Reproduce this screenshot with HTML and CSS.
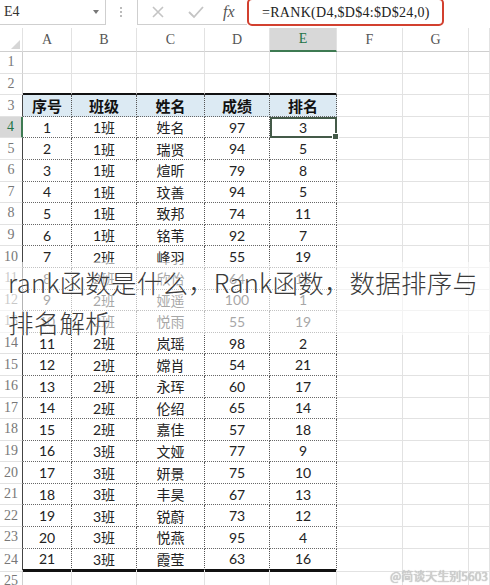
FILE: index.html
```html
<!DOCTYPE html>
<html lang="zh">
<head>
<meta charset="utf-8">
<title>RANK</title>
<link rel="stylesheet" href="styles.css">
</head>
<body>
<div class="page">
  <div class="bar">
    <div class="namebox"><span>E4</span><span class="arrow"></span></div>
    <div class="grip"></div>
    <div class="fbox">
      <svg class="ico" width="16" height="16" viewBox="0 0 16 16"><path d="M3 3L13 13M13 3L3 13" stroke="#c4c4c4" stroke-width="1.6" fill="none"/></svg>
      <svg class="ico" width="18" height="16" viewBox="0 0 18 16"><path d="M2 8L7 13L16 3" stroke="#c4c4c4" stroke-width="1.8" fill="none"/></svg>
      <span class="fx">fx</span>
    </div>
    <div class="formula">=RANK(D4,$D$4:$D$24,0)</div>
  </div>

  <div class="sheet">
    <div class="row hdr"><div class="corner"></div><div>A</div><div>B</div><div>C</div><div>D</div><div class="on">E</div><div>F</div><div>G</div><div></div></div>
    <div class="row"><div class="rh">1</div><div></div><div></div><div></div><div></div><div></div><div></div><div></div><div></div></div>
    <div class="row pre"><div class="rh">2</div><div></div><div></div><div></div><div></div><div></div><div></div><div></div><div></div></div>
    <div class="row tr head"><div class="rh">3</div><div>序号</div><div>班级</div><div>姓名</div><div>成绩</div><div>排名</div><div></div><div></div><div></div></div>
    <div class="row tr"><div class="rh on">4</div><div>1</div><div>1班</div><div>姓名</div><div>97</div><div class="sel">3</div><div></div><div></div><div></div></div>
    <div class="row tr"><div class="rh">5</div><div>2</div><div>1班</div><div>瑞贤</div><div>94</div><div>5</div><div></div><div></div><div></div></div>
    <div class="row tr"><div class="rh">6</div><div>3</div><div>1班</div><div>煊昕</div><div>79</div><div>8</div><div></div><div></div><div></div></div>
    <div class="row tr"><div class="rh">7</div><div>4</div><div>1班</div><div>玟善</div><div>94</div><div>5</div><div></div><div></div><div></div></div>
    <div class="row tr"><div class="rh">8</div><div>5</div><div>1班</div><div>致邦</div><div>74</div><div>11</div><div></div><div></div><div></div></div>
    <div class="row tr"><div class="rh">9</div><div>6</div><div>1班</div><div>铭苇</div><div>92</div><div>7</div><div></div><div></div><div></div></div>
    <div class="row tr"><div class="rh">10</div><div>7</div><div>2班</div><div>峰羽</div><div>55</div><div>19</div><div></div><div></div><div></div></div>
    <div class="row tr"><div class="rh">11</div><div>8</div><div>2班</div><div>欣怡</div><div>64</div><div>15</div><div></div><div></div><div></div></div>
    <div class="row tr"><div class="rh">12</div><div>9</div><div>2班</div><div>娅遥</div><div>100</div><div>1</div><div></div><div></div><div></div></div>
    <div class="row tr"><div class="rh">13</div><div>10</div><div>2班</div><div>悦雨</div><div>55</div><div>19</div><div></div><div></div><div></div></div>
    <div class="row tr"><div class="rh">14</div><div>11</div><div>2班</div><div>岚瑶</div><div>98</div><div>2</div><div></div><div></div><div></div></div>
    <div class="row tr"><div class="rh">15</div><div>12</div><div>2班</div><div>嫦肖</div><div>54</div><div>21</div><div></div><div></div><div></div></div>
    <div class="row tr"><div class="rh">16</div><div>13</div><div>2班</div><div>永珲</div><div>60</div><div>17</div><div></div><div></div><div></div></div>
    <div class="row tr"><div class="rh">17</div><div>14</div><div>2班</div><div>伦绍</div><div>65</div><div>14</div><div></div><div></div><div></div></div>
    <div class="row tr"><div class="rh">18</div><div>15</div><div>2班</div><div>嘉佳</div><div>57</div><div>18</div><div></div><div></div><div></div></div>
    <div class="row tr"><div class="rh">19</div><div>16</div><div>3班</div><div>文娅</div><div>77</div><div>9</div><div></div><div></div><div></div></div>
    <div class="row tr"><div class="rh">20</div><div>17</div><div>3班</div><div>妍景</div><div>75</div><div>10</div><div></div><div></div><div></div></div>
    <div class="row tr"><div class="rh">21</div><div>18</div><div>3班</div><div>丰昊</div><div>67</div><div>13</div><div></div><div></div><div></div></div>
    <div class="row tr"><div class="rh">22</div><div>19</div><div>3班</div><div>锐蔚</div><div>73</div><div>12</div><div></div><div></div><div></div></div>
    <div class="row tr"><div class="rh">23</div><div>20</div><div>3班</div><div>悦燕</div><div>95</div><div>4</div><div></div><div></div><div></div></div>
    <div class="row tr end"><div class="rh">24</div><div>21</div><div>3班</div><div>霞莹</div><div>63</div><div>16</div><div></div><div></div><div></div></div>
    <div class="row"><div class="rh">25</div><div></div><div></div><div></div><div></div><div></div><div></div><div></div><div></div></div>
  </div>

  <div class="title">rank函数是什么，Rank函数，数据排序与排名解析</div>
  <div class="mark">@简谈天生别5603</div>
</div>
</body>
</html>
```

FILE: styles.css
```css
* { box-sizing: border-box; }
html, body { margin: 0; padding: 0; }
body { background: #fff; width: 490px; height: 585px; overflow: hidden; }
.page { position: relative; width: 490px; height: 585px; overflow: hidden; }

.bar { height: 28px; display: flex; align-items: flex-start; background: #fff; }
.namebox {
  width: 106px; height: 25px; border: 1px solid #cfcfcf; border-top: none; border-left: none;
  display: flex; align-items: center; justify-content: space-between; padding: 0 6px 0 4px;
  font-family: "Liberation Serif", serif; font-size: 14px; color: #333;
}
.arrow { width: 0; height: 0; border-left: 3px solid transparent; border-right: 3px solid transparent; border-top: 4px solid #777; }
.grip { width: 31px; height: 25px; position: relative; }
.grip::before {
  content: ""; position: absolute; left: 14px; top: 7px; width: 2px; height: 12px;
  background: repeating-linear-gradient(#bbb 0 2px, transparent 2px 4px);
}
.fbox {
  width: 110px; height: 25px; border: 1px solid #cfcfcf; border-top: none; border-right: none;
  display: flex; align-items: center; padding-left: 12px; gap: 0;
}
.ico { display: block; }
.ico:first-child { margin-right: 21px; }
.ico:nth-child(2) { margin-right: 18px; }
.fx { font-family: "Liberation Serif", serif; font-style: italic; font-size: 16px; color: #555; }
.formula {
  width: 197px; height: 28px; margin-top: -2px; border: 2.5px solid #d2402f; border-radius: 5px;
  font-family: "Liberation Serif", serif; font-size: 14px; letter-spacing: 0.3px; color: #222;
  display: flex; align-items: center; padding-left: 13px; padding-top: 2px;
}

.sheet { display: flex; flex-direction: column; }
.row { display: grid; grid-template-columns: 23px 49px 65px 68px 65px 67px 66px 66px 21px; height: 21.6px; }
.row > div {
  border-right: 1px solid #e2e2e2; border-bottom: 1px solid #e2e2e2;
  display: flex; align-items: center; justify-content: center;
  font-family: Lato, "Noto Sans CJK SC", sans-serif; font-size: 14px; color: #222;
}
.row > .rh { font-family: "Liberation Serif", serif; font-size: 14px; color: #777; border-right-color: #cfcfcf; }

.hdr { height: 24px; }
.hdr > div { font-family: "Liberation Serif", serif; font-size: 14px; color: #555; border-bottom-color: #cfcfcf; border-right-color: #e2e2e2; }
.hdr > .corner { position: relative; }
.hdr > .corner::after {
  content: ""; position: absolute; right: 2px; bottom: 2px; width: 0; height: 0;
  border-left: 9px solid transparent; border-bottom: 9px solid #d6d6d6;
}
.hdr > .on { background: #d8d8d8; color: #217346; border-bottom: 2px solid #3e7a52; }

.pre > div:nth-child(n+2):nth-child(-n+6) { border-bottom: 2px solid #111; }
.tr > .rh { border-right: 1px solid #444; }
.tr > div:nth-child(n+2):nth-child(-n+6) { border-right: 1px dotted #555; border-bottom: 1px dotted #666; }
.tr > div:nth-child(6) { border-right: 1px solid #333; }
.tr.head > div:nth-child(n+2):nth-child(-n+6) { background: #dceaf3; font-family: "Noto Sans CJK SC", sans-serif; font-weight: 700; font-size: 15px; color: #111; }
.tr.end > div:nth-child(n+2):nth-child(-n+6) { border-bottom: 3px solid #111; }
.row > .rh.on { background: #d8d8d8; color: #217346; border-right: 2px solid #3e7a52; }
.row > .sel { position: relative; outline: 2px solid #445a48; outline-offset: -2px; }
.row > .sel::after {
  content: ""; position: absolute; right: -3px; bottom: -3px; width: 5px; height: 5px;
  background: #445a48; border: 1px solid #fff;
}

.title {
  position: absolute; left: 0; top: 262px; width: 490px; height: 73px;
  background: rgba(255, 255, 255, 0.6);
  padding: 0 0 0 8px;
  font-family: "Noto Sans CJK SC", sans-serif; font-weight: 300; font-size: 25.5px; letter-spacing: 0.2px; line-height: 40px; color: #3a3a3a;
  text-shadow: 0 0 2px #fff, 0 0 1px #fff;
}
.mark {
  position: absolute; right: 2px; bottom: 1px;
  font-family: "Noto Sans CJK SC", sans-serif; font-size: 12px; color: #d0d0d0;
  text-shadow: 0 0 1px #999;
}
```
